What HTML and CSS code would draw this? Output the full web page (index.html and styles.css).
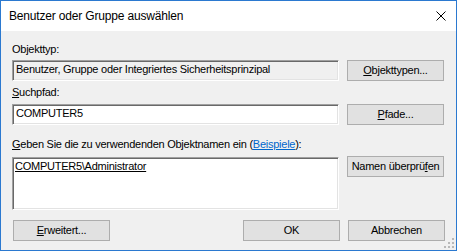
FILE: index.html
```html
<!DOCTYPE html>
<html lang="de">
<head>
<meta charset="utf-8">
<title>Benutzer oder Gruppe auswählen</title>
<link rel="stylesheet" href="styles.css">
</head>
<body>
<div class="window">
  <div class="titlebar">
    <span class="title">Benutzer oder Gruppe auswählen</span>
    <svg class="close" width="10" height="10" viewBox="0 0 10 10" aria-hidden="true">
      <path d="M0.5 0.5 L9.5 9.5 M9.5 0.5 L0.5 9.5" stroke="#000" stroke-width="1" fill="none"/>
    </svg>
  </div>
  <div class="body">
    <div class="form">
      <div class="lbl lbl-1">Objekttyp:</div>
      <div class="field readonly">Benutzer, Gruppe oder Integriertes Sicherheitsprinzipal</div>
      <button class="btn"><u>O</u>bjekttypen...</button>

      <div class="lbl lbl-2"><u>S</u>uchpfad:</div>
      <div class="field">COMPUTER5</div>
      <button class="btn"><u>P</u>fade...</button>

      <div class="lbl lbl-3"><u>G</u>eben Sie die zu verwendenden Objektnamen ein (<span class="link">Beispiele</span>):</div>
      <div class="field textarea"><span class="resolved">COMPUTER5\Administrator</span></div>
      <button class="btn btn-check">Namen überprü<u>f</u>en</button>
    </div>
    <div class="footer">
      <button class="btn btn-adv"><u>E</u>rweitert...</button>
      <div class="footer-right">
        <button class="btn">OK</button>
        <button class="btn">Abbrechen</button>
      </div>
    </div>
  </div>
  <svg class="grip" width="10" height="10" viewBox="0 0 10 10" aria-hidden="true">
    <rect x="8" y="0" width="2" height="2" fill="#b8b8b8"/>
    <rect x="4" y="4" width="2" height="2" fill="#b8b8b8"/>
    <rect x="8" y="4" width="2" height="2" fill="#b8b8b8"/>
    <rect x="0" y="8" width="2" height="2" fill="#b8b8b8"/>
    <rect x="4" y="8" width="2" height="2" fill="#b8b8b8"/>
    <rect x="8" y="8" width="2" height="2" fill="#b8b8b8"/>
  </svg>
</div>
</body>
</html>
```

FILE: styles.css
```css
html, body {
  margin: 0;
  padding: 0;
  background: #f0f0f0;
}

.window {
  position: relative;
  width: 457px;
  height: 251px;
  box-sizing: border-box;
  border: 1px solid #2b79d0;
  background: #f0f0f0;
  font-family: "Liberation Sans", Arial, sans-serif;
  font-size: 11px;
  line-height: 13px;
  letter-spacing: -0.25px;
  color: #000;
  display: flex;
  flex-direction: column;
}

.titlebar {
  height: 30px;
  background: #fff;
  display: flex;
  align-items: center;
  justify-content: space-between;
  padding: 0 10px 0 8px;
}

.title {
  font-family: "Liberation Sans", Arial, sans-serif;
  font-size: 12px;
  line-height: 16px;
  letter-spacing: -0.17px;
  color: #000;
}

.close {
  display: block;
}

.body {
  padding: 12px 11px 0 11px;
}

.form {
  display: grid;
  grid-template-columns: 327px 97px;
  column-gap: 8px;
  align-items: start;
}

.lbl {
  grid-column: 1 / span 2;
  height: 13px;
  white-space: nowrap;
}

.lbl-1 { margin-bottom: 4px; }
.lbl-2 { margin-top: 5px; margin-bottom: 5px; }
.lbl-3 { margin-top: 13px; margin-bottom: 6px; }

.link {
  color: #0066cc;
  text-decoration: underline;
}

.field {
  height: 21px;
  box-sizing: border-box;
  border-top: 1px solid #a0a0a0;
  border-left: 1px solid #a0a0a0;
  border-bottom: 1px solid #fff;
  border-right: 1px solid #fff;
  box-shadow: inset 1px 1px 0 #696969, inset -1px -1px 0 #e3e3e3;
  background: #fff;
  padding: 2px 3px 0 3px;
  white-space: nowrap;
  overflow: hidden;
}

.field.readonly {
  background: #f0f0f0;
}

.field.textarea {
  height: 53px;
  padding: 2px 2px 0 2px;
}

.resolved {
  text-decoration: underline;
}

.btn {
  display: block;
  width: 97px;
  height: 21px;
  box-sizing: border-box;
  margin: 0;
  padding: 0;
  border: 1px solid #adadad;
  background: #e1e1e1;
  font-family: "Liberation Sans", Arial, sans-serif;
  font-size: 11px;
  line-height: 13px;
  letter-spacing: -0.25px;
  color: #000;
  text-align: center;
}

.btn-check {
  margin-top: -1px;
}

.footer {
  display: flex;
  justify-content: space-between;
  margin-top: 10px;
}

.btn-adv {
  margin-left: 1px;
}

.footer-right {
  display: flex;
  gap: 8px;
}

.grip {
  position: absolute;
  right: 2px;
  bottom: 2px;
}
```
